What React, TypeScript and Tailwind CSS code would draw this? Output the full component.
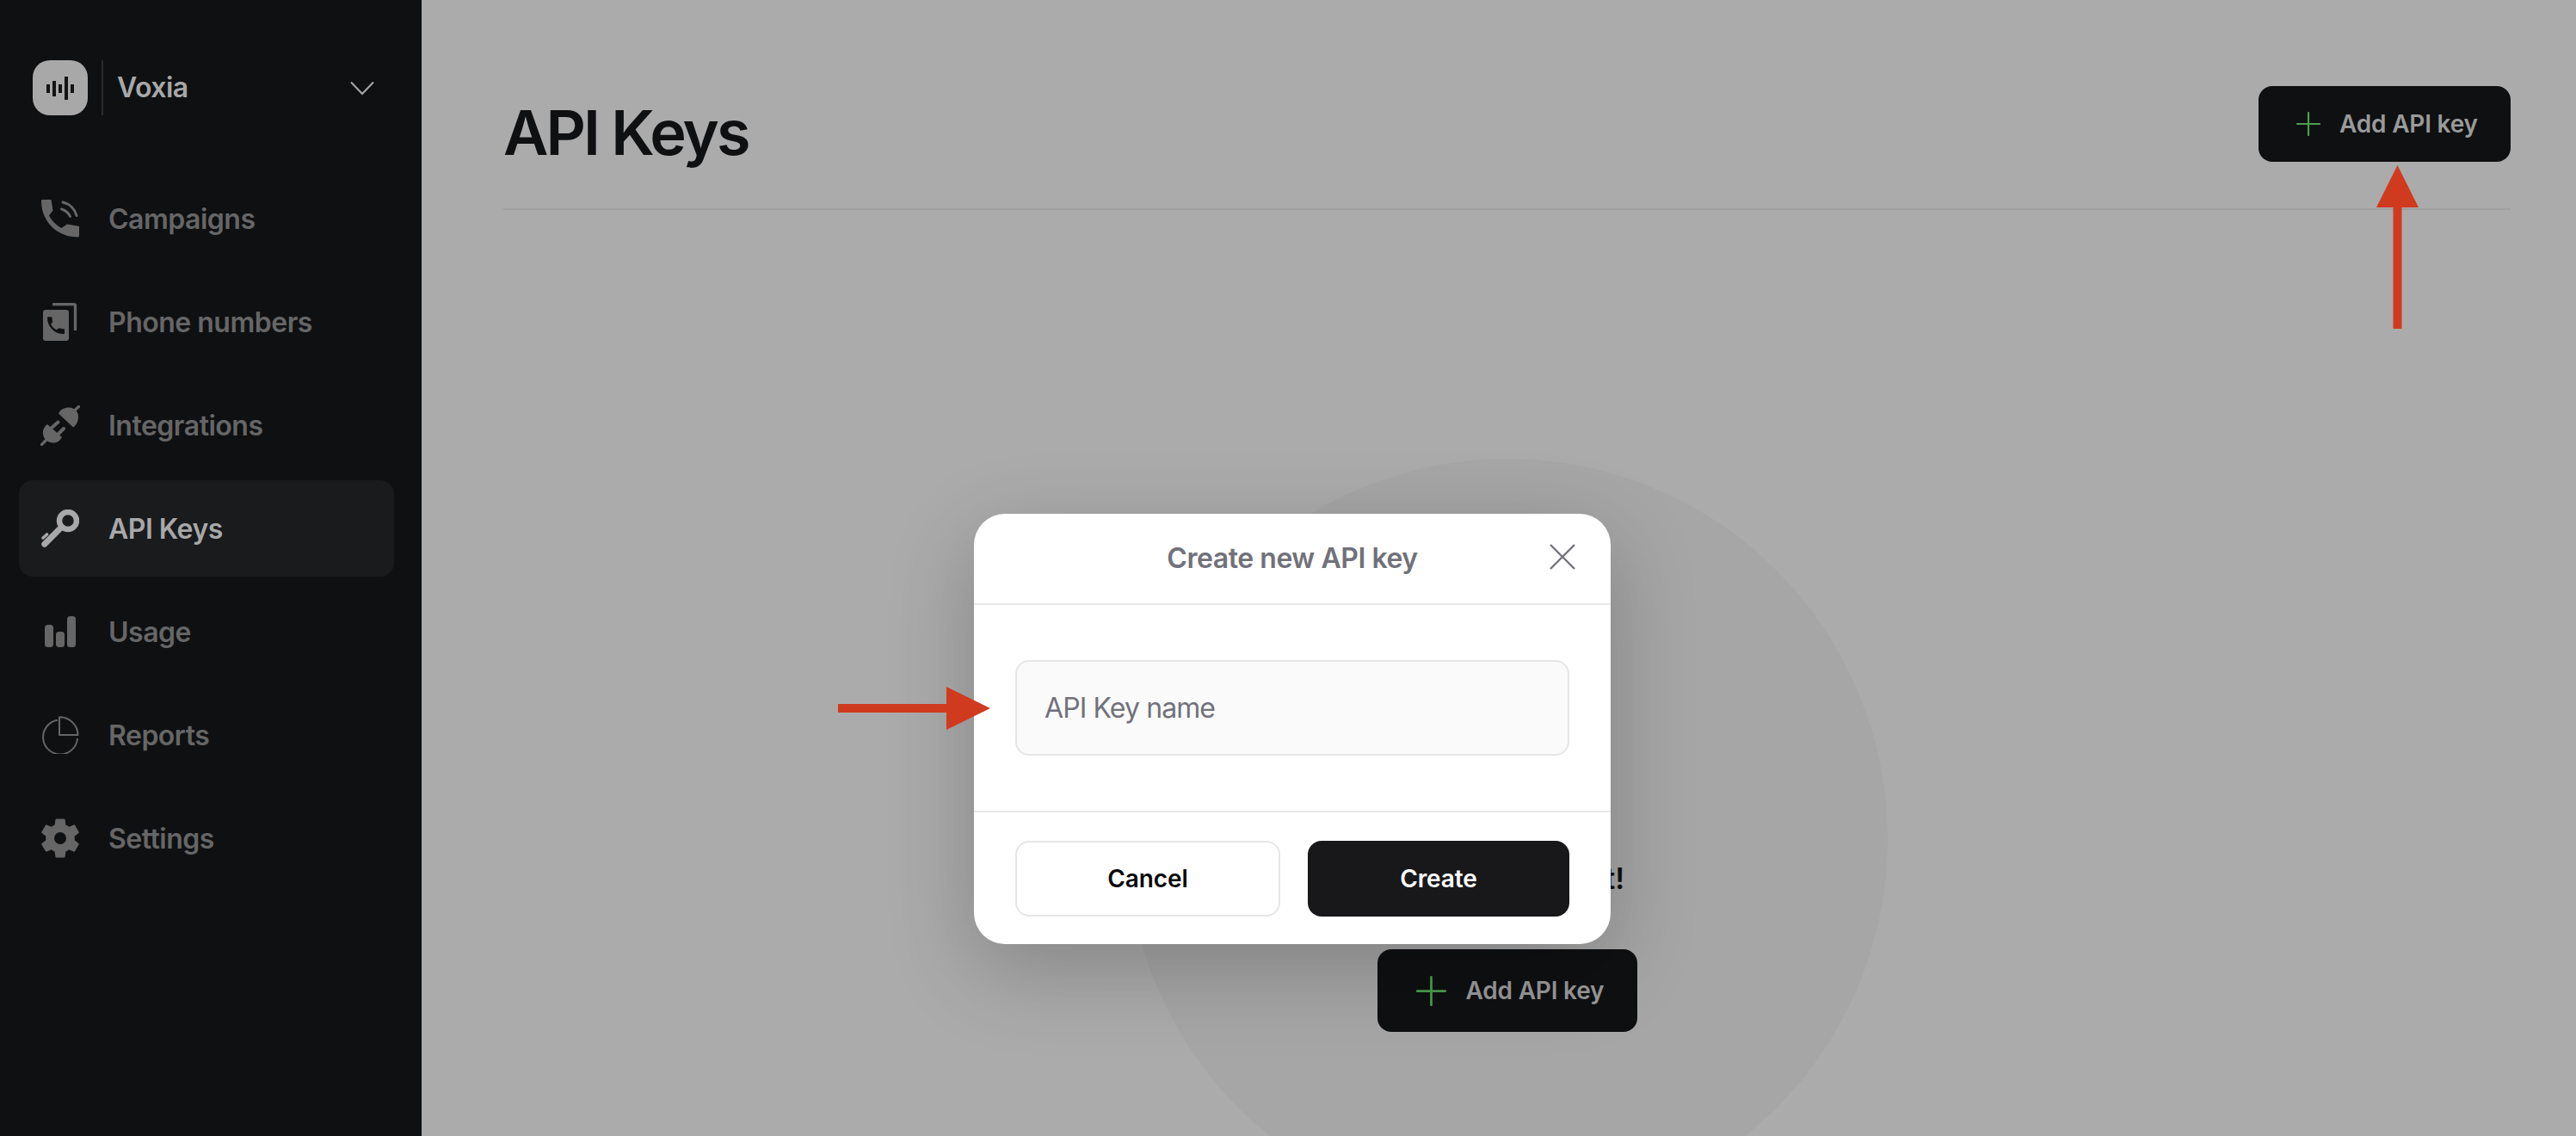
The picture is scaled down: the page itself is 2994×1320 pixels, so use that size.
import React from "react";

const handset = "M1.500 0H11.500L13.500 12.500L9 18.500C12 24.500 17 29.500 23.500 33L30 28.500L44 31V42C44 43 43 43.500 42 43.500C18 43.500 0 25 0 1.500C0 .5 .5 0 1.500 0Z";

const Phone = () => (
  <svg viewBox="0 0 44 44" className="h-[44px] w-[44px] shrink-0" fill="#666666">
    <path d={handset} />
    <path d="M25 3C33 5 39 11 41 18.500M23.500 11C28 12.500 31.500 15 33.500 19.500" fill="none" stroke="#666666" strokeWidth="3" strokeLinecap="round" />
  </svg>
);
const PhoneNumbers = () => (
  <svg viewBox="0 0 44 44" className="h-[44px] w-[44px] shrink-0" fill="#666666">
    <path d="M13 1.700H38a1.500 1.500 0 0 1 1.500 1.500V32" fill="none" stroke="#666666" strokeWidth="3.300" />
    <rect x="2" y="8" width="30" height="36" rx="3" />
    <path d={handset} transform="translate(7 16.300) scale(.455)" fill="#0f1012" />
  </svg>
);
const Plug = () => (
  <svg viewBox="0 0 46 47" className="h-[47px] w-[46px] shrink-0" fill="#666666">
    <path d="M21 9.500C23 5 28 2.500 33 2.500C40 2.500 44 8 44 13C44 18 42 23 38 25.500Z" />
    <path d="M8 22C4 25 2.500 29 3 33C3.500 39 8 43 14 43.500C19 44 23 41 25 37Z" />
    <path d="M38 7.500 44.500 1.500M8 39 1.500 45.500" fill="none" stroke="#666666" strokeWidth="3.200" strokeLinecap="round" />
    <path d="M12 27 20.500 19.500M20 34 27 27" fill="none" stroke="#666666" strokeWidth="4" strokeLinecap="round" />
  </svg>
);
const Key = () => (
  <svg viewBox="0 0 44 44" className="h-[44px] w-[44px] shrink-0" fill="none" stroke="#a8a8a8">
    <circle cx="31" cy="13" r="10" strokeWidth="6.500" />
    <path d="M22 22 3.800 40.200" strokeWidth="7" strokeLinecap="round" />
    <path d="M2 33 6.500 29" strokeWidth="3.600" strokeLinecap="round" />
  </svg>
);
const Usage = () => (
  <svg viewBox="0 0 36 36" className="h-[36px] w-[36px] shrink-0" fill="#666666">
    <rect x="0" y="10" width="10" height="26" rx="3.500" />
    <rect x="13" y="18" width="10" height="18" rx="3.500" />
    <rect x="26" y="0" width="10" height="36" rx="3.500" />
  </svg>
);
const Reports = () => (
  <svg viewBox="0 0 44 44" className="h-[44px] w-[44px] shrink-0" fill="none" stroke="#666666" strokeWidth="2">
    <path d="M19 4.700A20 20 0 1 0 42 26" />
    <path d="M21 1.200V22H42.500A21 21 0 0 0 21 1.200Z" strokeLinejoin="round" />
  </svg>
);
const Gear = () => (
  <svg viewBox="0 0 24 24" className="h-[56px] w-[56px] shrink-0" fill="#666666">
    <path d="M19.140 12.940c.04-.3.060-.61.060-.94 0-.32-.020-.64-.070-.94l2.030-1.580a.5.5 0 0 0 .12-.61l-1.920-3.320a.5.5 0 0 0-.59-.22l-2.390.96c-.5-.38-1.030-.7-1.620-.94l-.36-2.540a.48.48 0 0 0-.48-.41h-3.840a.48.48 0 0 0-.47.41l-.36 2.540c-.59.24-1.130.57-1.620.94l-2.390-.96a.49.49 0 0 0-.59.22L2.740 8.870a.48.48 0 0 0 .12.61l2.030 1.580c-.05.3-.09.63-.09.94s.020.64.070.94l-2.030 1.580a.5.5 0 0 0-.12.61l1.920 3.320c.12.22.37.29.59.22l2.390-.96c.5.38 1.030.7 1.620.94l.36 2.540c.05.24.24.41.48.41h3.840c.24 0 .44-.17.47-.41l.36-2.540c.59-.24 1.130-.56 1.620-.94l2.390.96c.22.080.47 0 .59-.22l1.920-3.320a.5.5 0 0 0-.12-.61l-2.010-1.580zM12 15A3 3 0 1 1 12 9a3 3 0 0 1 0 6z" fillRule="evenodd" />
  </svg>
);

const PlusIcon = ({ size }: { size: number }) => (
  <svg width={size} height={size} viewBox="0 0 28 28" fill="none" stroke="#4a9f4e" strokeWidth="2.200" strokeLinecap="round" className="shrink-0">
    <path d="M14 1v26M1 14h26" />
  </svg>
);

const nav = [
  { label: "Campaigns", icon: <Phone /> },
  { label: "Phone numbers", icon: <PhoneNumbers /> },
  { label: "Integrations", icon: <Plug /> },
  { label: "API Keys", icon: <Key />, active: true },
  { label: "Usage", icon: <Usage /> },
  { label: "Reports", icon: <Reports /> },
  { label: "Settings", icon: <Gear /> },
];

export default function App() {
  return (
    <div className="relative flex h-[1320px] w-[2994px] overflow-hidden bg-[#ababab] font-['Inter',sans-serif]">
      <aside className="flex w-[490px] shrink-0 flex-col bg-[#0f1012] pl-[22px] pr-[32px] pt-[70px]">
        <div className="flex h-[64px] items-center pl-[16px] pr-[23px]">
          <div className="flex h-[64px] w-[64px] items-center justify-center rounded-[20px] bg-[#a8a8a8]">
            <svg width="32" height="27" viewBox="0 0 32 27" fill="#141416">
              <rect x="0" y="9" width="4" height="10" />
              <rect x="7" y="5" width="4" height="18" />
              <rect x="14" y="9" width="4" height="10" />
              <rect x="21" y="0" width="4" height="27" />
              <rect x="28" y="9" width="4" height="10" />
            </svg>
          </div>
          <div className="ml-[16px] h-[64px] w-[2px] bg-[#2b2c2e]" />
          <span className="ml-[16px] flex-1 text-[32px] font-semibold leading-none tracking-[-0.5px] text-[#a8a8a8]">Voxia</span>
          <svg width="28" height="17" viewBox="0 0 28 17" fill="none" stroke="#a8a8a8" strokeWidth="2">
            <path d="M1 1.500 14 15 27 1.500" />
          </svg>
        </div>
        <nav className="mt-[64px] flex flex-col gap-[8px]">
          {nav.map((n) => (
            <div
              key={n.label}
              className={
                n.active
                  ? "flex h-[112px] items-center rounded-[16px] bg-[#1a1b1d] pl-[26px] text-[#a8a8a8]"
                  : "flex h-[112px] items-center rounded-[16px] pl-[26px] text-[#666666]"
              }
            >
              <div className="flex w-[44px] shrink-0 items-center justify-center">{n.icon}</div>
              <span className="ml-[34px] pt-[2px] text-[32px] font-semibold leading-none tracking-[-0.5px]">{n.label}</span>
            </div>
          ))}
        </nav>
      </aside>

      <main className="relative flex flex-1 flex-col pl-[95px] pr-[76px] pt-[100px]">
        <div className="absolute left-[820px] top-[533px] h-[884px] w-[884px] rounded-full bg-[#a6a6a6]" />
        <header className="relative flex h-[144px] items-start justify-between border-b-2 border-[#a0a0a0]">
          <h1 className="mt-[14px] text-[72px] font-semibold leading-[80px] tracking-[-2.9px] text-[#0f1012]">API Keys</h1>
          <button className="flex h-[88px] w-[293px] items-center gap-[22px] rounded-[16px] bg-[#0f1012] pl-[44px] text-[28px] font-semibold tracking-[-0.2px] text-[#9a9a9a]">
            <PlusIcon size={28} />
            <span>Add API key</span>
          </button>
        </header>
        <div className="relative mt-[757px] flex flex-col items-center">
          <span className="whitespace-nowrap pl-[6px] text-[34px] font-semibold leading-[40px] text-[#0f1012]">No API keys yet!</span>
          <button className="mt-[62px] flex h-[96px] w-[302px] items-center gap-[23px] rounded-[16px] bg-[#0f1012] pl-[45px] text-[28px] font-semibold tracking-[-0.2px] text-[#9a9a9a]">
            <PlusIcon size={35} />
            <span>Add API key</span>
          </button>
        </div>
      </main>

      <div className="absolute left-[1132px] top-[597px] flex h-[500px] w-[740px] flex-col rounded-[36px] bg-white shadow-[0_30px_100px_rgba(0,0,0,0.22)]">
        <div className="relative flex h-[106px] items-center justify-center border-b-2 border-[#e8e8e8]">
          <span className="text-[32px] font-semibold tracking-[-0.45px] text-[#71717a]">Create new API key</span>
          <svg className="absolute right-[41px] top-[35px]" width="30" height="30" viewBox="0 0 30 30" fill="none" stroke="#71717a" strokeWidth="2.400">
            <path d="M1 1l28 28M29 1 1 29" />
          </svg>
        </div>
        <div className="flex h-[241px] items-center border-b-2 border-[#e8e8e8] px-[48px]">
          <div className="flex h-[111px] w-full items-center rounded-[16px] border-2 border-[#e6e6e6] bg-[#fafafa] pl-[32px] text-[32px] tracking-[-0.9px] text-[#71717a]">
            API Key name
          </div>
        </div>
        <div className="flex flex-1 items-start gap-[32px] px-[48px] pt-[33px]">
          <button className="flex h-[88px] flex-1 items-center justify-center rounded-[16px] border-2 border-[#e6e6e6] bg-white text-[28px] font-semibold tracking-[-0.1px] text-[#09090b]">Cancel</button>
          <button className="flex h-[88px] flex-1 items-center justify-center rounded-[16px] bg-[#18181b] text-[28px] font-semibold tracking-[-0.1px] text-white">Create</button>
        </div>
      </div>

      <svg className="absolute left-[2762px] top-[192px]" width="49" height="190" viewBox="0 0 49 190" fill="#d03a1f">
        <path d="M24.500 0 49 49H29.500V190H19.500V49H0z" />
      </svg>
      <svg className="absolute left-[974px] top-[798px]" width="177" height="50" viewBox="0 0 177 50" fill="#d03a1f">
        <path d="M0 20H126V0L177 25 126 50V30H0z" />
      </svg>
    </div>
  );
}
